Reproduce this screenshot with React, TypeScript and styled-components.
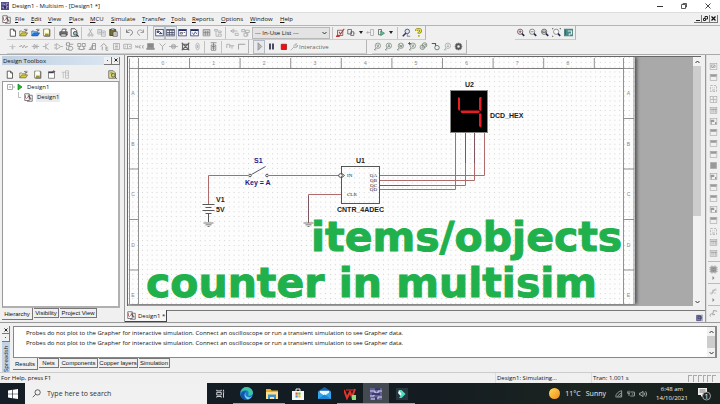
import React, { ReactNode } from "react";
import styled, { createGlobalStyle, css } from "styled-components";

const GlobalStyle = createGlobalStyle`
  *, *::before, *::after { box-sizing: border-box; }
  html, body { margin: 0; padding: 0; }
  body { font-family: "Open Sans", "Noto Sans", sans-serif; font-size: 6px; line-height: 10px; color: #111; background: #f0f0f0; overflow: hidden; }
  button, select, input { font: inherit; color: inherit; margin: 0; padding: 0; border: 0; background: none; border-radius: 0; }
  ul { list-style: none; margin: 0; padding: 0; }
  p, h1, h2 { margin: 0; font-weight: 400; font-size: inherit; }
  svg { display: block; }
`;

/* ---------- icons (12 x 12 grid) ---------- */

const K = "#333";
const G = "#a2a2a2";

const probe = (body: ReactNode, color = "#6d7f70") => (
  <g fill="none" stroke={color} strokeWidth=".9">
    <circle cx="6.5" cy="5" r="3.6" />
    <path d="M4 8 1.5 10.5h3" />
    {body}
  </g>
);

const part = (body: ReactNode) => (
  <g fill="none" stroke="#999">
    <rect x="1.5" y="2" width="9" height="8" strokeWidth=".7" />
    {body}
  </g>
);

const lens = (color: string, body: ReactNode) => (
  <g fill="none" stroke={color}>
    <circle cx="5.5" cy="5" r="3.5" fill="#f7f7f7" />
    <path d="m8 7.5 3 3" stroke="#23235c" strokeWidth="2" />
    {body}
  </g>
);

const icons: Record<string, ReactNode> = {
  app: <g><rect width="12" height="12" fill="#514a86" /><path d="M1 3h4v2h3V2h3M1 8h3v2h4V7h3" fill="none" stroke="#c9c2ea" /><path d="M6 5v6" stroke="#221d4a" strokeWidth="2" /></g>,
  sheet: <g fill="none" stroke="#555"><path d="M1 1h6v9H1zM5 3h6v8H4" fill="#fff" /><path d="M2 3v4M3 8l3-4 2 3" stroke="#b04e5e" /><path d="M6 5h2v3h2" stroke="#333" /></g>,
  new: <path d="M3 1.5h4.5L10 4v7H3zM7.5 1.5V4H10" fill="#fff" stroke={K} />,
  open: <g stroke="#5a5a22" strokeWidth=".8"><path d="M1 10.500V4h3l1 1h4v2" fill="#fff6a0" /><path d="M1 10.500 3.500 6.500H11.500L9 10.500z" fill="#d6c83a" /><path d="M6.500 2.500q2-2 3.500.5M10.500 1v2.500H8" fill="none" stroke={K} /></g>,
  folder: <g stroke="#1d4f9c" strokeWidth=".8"><path d="M1 10.500V4h3l1 1h4v2" fill="#8fd0ff" /><path d="M1 10.500 3.500 6.500H11.500L9 10.500z" fill="#1f7ce0" /><path d="M6.500 2.500q2-2 3.500.5M10.500 1v2.500H8" fill="none" stroke={K} /></g>,
  save: <g><path d="M2 1.500h8v9H2z" fill="#f7f5c0" stroke="#777" /><path d="M4 2h4v4H4z" fill="#fff" /><path d="M4 7.500h5v3H4z" fill="#99962f" /><path d="M10.500 2v9H3" fill="none" stroke="#555" /></g>,
  print: <g><path d="M3.500 5 4.500 1.500h5L8.500 5" fill="#fff" stroke={K} /><path d="M1 5h10v4.500H1z" fill="#777" stroke={K} strokeWidth=".8" /><path d="M2.500 8h7v3h-7z" fill="#ddd" stroke={K} strokeWidth=".8" /></g>,
  preview: <g><path d="M1.500 1h5L9 3.500V11H1.500z" fill="#fff" stroke={K} /><circle cx="7" cy="7" r="2.500" fill="#8fc7c5" stroke={K} /><path d="m9 9 2.500 2.500" stroke={K} strokeWidth="1.500" /></g>,
  cut: <path d="M4 1 8 8M8 1 4 8M2.500 9.500a1.500 1.500 0 1 0 3 0a1.500 1.500 0 1 0-3 0M6.500 9.500a1.500 1.500 0 1 0 3 0a1.500 1.500 0 1 0-3 0" fill="none" stroke={G} />,
  copy: <path d="M1 2h5v6H1zM6 4h5v7H6zM2 4h3M2 6h3M7 6h3M7 8h3" fill="none" stroke="#aaa" />,
  paste: <g><path d="M1 2h8v8H1z" fill="#77732c" stroke={K} /><path d="M3 1h4v2H3z" fill="#ddd" stroke={K} strokeWidth=".7" /><path d="M5.500 5H11v6H5.500z" fill="#eee" stroke={K} strokeWidth=".8" /><path d="M7 7h3M7 9h3" stroke="#666" strokeWidth=".7" /></g>,
  undo: <path d="M2 2v4h4M2.300 5.500C4 1 10.500 2 10 6.500Q9.500 9 6.500 10" fill="none" stroke="#666" />,
  redo: <path d="M10 2v4H6M9.700 5.500C8 1 1.500 2 2 6.500Q2.500 9 5.500 10" fill="none" stroke="#888" />,
  view1: <g><rect x="1" y="2" width="10" height="8.500" fill="#fff" stroke="#29305e" /><path d="M3 4h2v2H3zM5.500 7.500h4M6 4.500l3 3" fill="none" stroke="#29305e" strokeWidth="1.300" /></g>,
  view2: <g><rect x="1" y="2" width="10" height="8.500" fill="#fff" stroke="#39405e" /><path d="M1 3h10M1 6h10M1 8.300h10M4.500 3v7M8 3v7" stroke="#39405e" /></g>,
  view3: <g><rect x="1" y="2" width="10" height="8.500" fill="#fff" stroke="#29306e" /><path d="M1 3h10" stroke="#29306e" strokeWidth="2" /><path d="M3 6h3v2H3zM7.500 6h2" stroke="#555" fill="none" /></g>,
  view4: <g><rect x="1" y="2" width="10" height="8.500" fill="#fff" stroke="#29305e" /><path d="M1 3h10" stroke="#29305e" strokeWidth="2" /><path d="m3 6 2 3 2-4 2 3" stroke="#2c3e8e" fill="none" /></g>,
  table: <path d="M1.500 2h9v8.500h-9zM1.500 4h9M4.500 4v6M7.500 4v6M1.500 6h9M1.500 8h9" fill="none" stroke="#777" strokeWidth=".9" />,
  tree: <path d="M2 2h4v2H2zM7 4h4v2H7zM4 4v7h3M7 8h4v3H7z" fill="none" stroke="#aaa" />,
  back: <path d="M5 1v6M1 4l3-2M1 4l3 2M1 4h9M7 7h4v3H7z" fill="none" stroke="#aaa" />,
  parts: <path d="M1 2h4v3H1zM6 3h5v3H6zM4 7h4v4H4zM9 7v4" fill="none" stroke={G} />,
  erc: <g fill="none"><path d="M2 3h7v7H2z" stroke="#6b4444" /><path d="m4 5 2 3 5-7" stroke="#b33" strokeWidth="1.400" /><path d="M2 10h2v1H1z" stroke="#c33" strokeWidth="2" /></g>,
  transfer: <g fill="none" stroke="#555"><path d="M1 2h5v6H1zM5 5h4v5H5z" /><path d="M8 7h3" stroke="#6a8" /></g>,
  backann: <path d="M6 2h4v8H6zM1 6h5M1 6l2-2M1 6l2 2" fill="none" stroke="#aaa" />,
  forward: <g fill="none"><path d="M2 2h4v7H2z" stroke="#555" /><path d="M5 4l5 3-5 3z" stroke="#2c8d66" fill="#6db898" /></g>,
  find: <g fill="none" stroke="#2a2f5c"><circle cx="7" cy="4.500" r="3" fill="#dce7f4" /><path d="M5 7 1 11" strokeWidth="2" /><path d="M7 8v3h4" stroke="#667" /></g>,
  help: <g><path d="M3 4Q3 1.500 6 1.500T9 4Q9 5.500 6.500 6.500V8" fill="none" stroke="#6e6a12" strokeWidth="3" /><path d="M3 4Q3 1.500 6 1.500T9 4Q9 5.500 6.500 6.500V8" fill="none" stroke="#f1e638" strokeWidth="1.500" /><circle cx="6.500" cy="10.500" r="1.300" fill="#b5ab1c" /></g>,
  source: <path d="M2 6h8M6 3v7M4 8h4" fill="none" stroke="#bbb" />,
  resistor: <path d="M0 6h2l1-2 2 4 2-4 2 4 1-2h2" fill="none" stroke={G} />,
  diode: <path d="M1 6h10M4 3v6l4-3zM8 3v6" fill="none" stroke={G} />,
  transistor: <path d="M1 6h4M5 2v8M5 5l4-3M5 7l4 3" fill="none" stroke={G} />,
  opamp: <path d="M3 2v8l6-4zM0 4h3M0 8h3M9 6h3" fill="none" stroke={G} />,
  gate: <path d="M2 1h4v4H2zM5 6h4q3 2 0 5H5zM1 3h1M6 3h5M2 7v3h3" fill="none" stroke="#888" />,
  cmos: <path d="M1 2h4v4H1zM7 2h4v4H7zM3 6v4h6V6M1 9h2M9 9h2" fill="none" stroke="#888" />,
  misc: <path d="M6 2h4v8H6zM1 10h4V5h5M3 10V7" fill="none" stroke="#888" />,
  mixed: <path d="m1 6 4-4 4 4M3 6v5M8 6v5h3M8 8h3" fill="none" stroke="#888" />,
  indicator: <path d="M2 2h8v8H2zM4 4h4M4 6h4M4 8h4" fill="none" stroke={G} />,
  power: <path d="M1 3h10v6H1zM6 3v6M3 5v2M8 6h2" fill="none" stroke={G} />,
  miscword: <path d="M0 8V5h1l1 2 1-2v3M4 5v3M8 5H6v3h2M12 5H10v3h2" fill="none" stroke={G} />,
  keyboard: <path d="M2 2h8v6H2zM1 8h10v2H1z" fill="#888" stroke="#999" />,
  antenna: <path d="M6 11V6L2 2M6 6l4-4" fill="none" stroke="#999" />,
  motor: <path d="M3 6a3 3 0 1 0 6 0a3 3 0 1 0-6 0M0 6h12M4 5h4v2H4z" fill="none" stroke={G} />,
  ni: <g stroke="#666" fill="none"><path d="M2 3h8v7H2zM1 1l10 10M11 1 1 11" strokeWidth="1.500" /></g>,
  connector: <path d="M4 3q2-3 4 0v6q-2 3-4 0zM6 4v4" fill="none" stroke={G} />,
  mcu: <path d="M3 4h6v7H3zM2 1h8M6 1v10M4 6h4M4 8h4" fill="none" stroke="#777" />,
  block: <path d="M1 8V3h4v5M5 5h6M8 5v4" fill="none" stroke={G} />,
  bus: <path d="M2 10V3h9" fill="none" stroke="#888" />,
  play: <path d="M4 1v10l5-5z" fill="#b8b8b8" stroke="#888" />,
  pause: <path d="M3 2h2v8H3zM7 2h2v8H7z" fill="#14143a" />,
  stop: <path d="M3 3h7v7H3z" fill="#f50d0d" stroke="#941616" />,
  wrench: <path d="m1 11 5-5M6 6q-1-4 4-5L8 4l2 1 1-2q2 4-5 4" fill="none" stroke="#999" />,
  probeV: probe(<path d="m5 3 1.500 4L8 3" />),
  probeA: probe(<path d="m5 7 1.500-4L8 7M5.500 6h2" />),
  probeW: probe(<path d="m4.500 3 1 4 1-3 1 3 1-4" />),
  probeVV: <g>{probe(<path d="m5 3 1.500 4L8 3" />)}<path d="M0 2h4M2 0v4" stroke="#354f36" /></g>,
  probeAV: <g fill="none" stroke="#6d7f70"><circle cx="7.500" cy="4" r="3" /><circle cx="4.500" cy="7" r="3" /><path d="M7 3h2v2M4 6v2h2" /></g>,
  probeRef: <g fill="none" stroke="#3f6a43"><path d="M1 2h5v3" strokeWidth="1.500" /><circle cx="8" cy="7.500" r="3" /></g>,
  probeD: probe(<path d="M5 4h3M5 6h3" />, "#999"),
  gear: <g fill="none" stroke="#555"><circle cx="6" cy="6" r="3" strokeWidth="2.500" /><path d="M6 1v1M6 10v1M1 6h1M10 6h1M2.500 2.500l1 1M8.500 8.500l1 1M2.500 9.500l1-1M8.500 3.500l1-1" strokeWidth="2" /></g>,
  zoomIn: lens("#444", <path d="M3.500 5h4M5.500 3v4" stroke="#933" />),
  zoomOut: lens("#666", <path d="M3.500 5h4" stroke="#3b7a50" />),
  zoomArea: lens("#444", <path d="M3.500 4h4v2h-4z" stroke="#555" />),
  zoomFit: <g>{lens("#777", null)}<path d="M0 2V0h2M10 0h2v2M0 10v2h2" fill="none" stroke={K} /></g>,
  zoomFull: <g><path d="M0 1h12v10H0z" fill="#4f8886" /><path d="M5 4h5v4H7v2" fill="none" stroke="#d6eeee" strokeWidth="1.500" /><path d="M2 3v6" stroke="#2d6260" /></g>,
  close: <g><path d="M2 2h8v9H2z" fill="#fff" stroke="#666" /><path d="M2 3.500h7" stroke="#334" strokeWidth="1.500" /><path d="M9 0v4M7 2h4" stroke="#a33" /></g>,
  rename: <path d="M1 3h5M3 3v8M6 1h4v10H6zM7 4h3M7 7h3" fill="none" stroke="#b5b5b5" />,
  find2: <g><path d="M1 1h6l3 3v7H1z" fill="#e8e38c" stroke="#555" /><circle cx="7" cy="7" r="2.500" fill="#cfd255" stroke="#444" /><path d="m9 9 3 3M3 4h3" stroke="#444" /></g>,
  meter: part(<path d="M3 4h5v3H3zM4 8l3-3" />),
  panelTop: part(<path d="M2 3.500h8" strokeWidth="3" />),
  dots: <g fill="none" stroke="#aaa"><rect x="2" y="2" width="8" height="8" strokeDasharray="3 1.500" /><path d="M4 5h1M7 5h1M4 8h4" /></g>,
  scope: part(<path d="M2 6h8M6 2v8M4 4h1M8 8h1" stroke="#b0b0b0" />),
  wordgen: part(<path d="M2 4.500h8M4 3v6M6.500 3v6M9 3v6" />),
  square: <g><path d="M2 2h8v8H2z" fill="#999" stroke="#aaa" /></g>,
  panelMix: part(<path d="M2 5h5M8 8h2M3 8h1" strokeWidth="3" />),
  clampProbe: <path d="M1 8h4V4h5M3 10l6-8M7 8h2" fill="none" stroke="#aaa" />,
  chip: <g><path d="M2 2h8v8H2z" fill="#888" /><path d="M0 3.500h12M0 6h12M0 8.500h12M4 0v12M8 0v12" stroke="#aaa" strokeWidth=".8" /></g>,
  current: <path d="M2 10a2 2 0 1 1 3-3l1-5 5 1M5 8l3-1" fill="none" stroke="#888" />,
  flag: <g><path d="M1 2h6v8H1z" fill="#8080bd" stroke="#333361" /><path d="M3 4h5v3H3zM9 1v10" fill="none" stroke="#333361" /></g>,
  search: <g fill="none" stroke="#333"><circle cx="7.500" cy="4.500" r="3.500" /><path d="m5 7-4 4" /></g>,
  windows: <path d="m0 1.700 5.200-.7v4.600H0zM6 .900 12 0v5.600H6zM0 6.400h5.200V11L0 10.300zM6 6.400h6V12l-6-.900z" fill="#fff" />,
  taskview: <path d="M1 1v1.500h6V1M1 4.500h6v3.500H1zM1 11.500V10h6v1.500M10 1v2M10 5v6.500M9 4h2" fill="none" stroke="#f2f2f2" strokeWidth="1.100" />,
  edge: <g><circle cx="6" cy="6" r="6" fill="#1d79cf" /><path d="M.3 5Q2 0 6.500 0 12 1 12 6 10.500 9 7.500 7.500 9 3.500 5.500 3 2 3 .3 5z" fill="#3dc7a0" /><path d="M4.500 5Q2 9 7 11.800 3 12.500 1 9 0 5 5.500 3.500z" fill="#12549f" /><path d="M5 5q-1 4 4 4.600l2-1Q9 12 6.500 11 3 8 5 5z" fill="#79d8ef" /></g>,
  explorer: <g><path d="M0 1h4.500l1 1.500H12V11H0z" fill="#e8ae2b" /><path d="M0 4h12v7H0z" fill="#ffe08a" /><path d="M2 6.500h8V11H8V9H4v2H2z" fill="#3f8fd4" /></g>,
  store: <g><path d="M4 3V1h4v2" fill="none" stroke="#eee" /><path d="M0 3h12v9H0z" fill="#f6f6f6" /><path d="M3.500 4.500h2.200v2.200H3.500z" fill="#e4542b" /><path d="M6.300 4.500h2.200v2.200H6.300z" fill="#7db72f" /><path d="M3.500 7.300h2.200v2.200H3.500z" fill="#2e9fe0" /><path d="M6.300 7.300h2.200v2.200H6.300z" fill="#f3b51e" /></g>,
  mail: <g><path d="M0 4 6 0l6 4v7H0z" fill="#1263b4" /><path d="M1.500 3.500h9V8h-9z" fill="#eef7ff" /><path d="m0 4 6 4 6-4v7H0z" fill="#35a5ea" /><path d="m0 11 6-4 6 4z" fill="#1d86d3" /></g>,
  wps: <g fill="none"><path d="m0 2 3 8 3-6 2 5 3-8" stroke="#e3362d" strokeWidth="2" /><path d="M2 2h8" stroke="#b32222" strokeWidth="1.500" /><path d="M8 7h4v5H8z" fill="#8fdc7f" /></g>,
  multisim: <g><path d="M0 0h12v12H0z" fill="#615f94" /><path d="M0 3h5v2h3V3h4M0 8h4V6M12 9H8v2M1 11h4" fill="none" stroke="#d7d6f0" /><path d="M5 1h5M2 6h8M6 9v3" stroke="#2e2b5e" strokeWidth="1.300" /></g>,
  filmora: <g><path d="M0 0h12v12H0z" fill="#26363f" /><path d="M3 2h2.500l4 4-4 4H3l3-4z" fill="#4fe3c2" /><path d="m3 2 3 4-1.500 2L2 5z" fill="#e3fff8" /></g>,
  wifi: <g fill="none" stroke="#ccc"><path d="M1 10Q2 3 10 1M4 10Q5 6 10 4.500M7 10q1-2 3-2.500M1 10.500h9V1" /></g>,
  battery: <path d="M1 2v3h3M3 1v8M5 3h6v6H5M8 5v2M11.500 5v2" fill="none" stroke="#ccc" />,
  volume: <path d="M1 4.500h2L6 2v8L3 7.500H1zM8 4q1.500 2 0 4M10 2q3 4 0 8" fill="none" stroke="#ddd" />,
};

const Svg = styled.svg<{ $s: number }>`
  width: ${(p) => p.$s}px;
  height: ${(p) => p.$s}px;
  flex: none;
`;

const Icon = ({ name, size = 9 }: { name: string; size?: number }) => (
  <Svg viewBox="0 0 12 12" $s={size} aria-hidden="true">
    {icons[name]}
  </Svg>
);

/* ---------- shell ---------- */

const Shell = styled.div`
  display: flex;
  flex-direction: column;
  height: 100vh;
  background: #f0f0f0;
`;

const TitleBar = styled.header`
  display: flex;
  align-items: center;
  height: 13px;
  padding: 0 2px 0 1px;
  gap: 3px;
  background: #fff;
  border-bottom: 1px solid #ddd;
`;

const Title = styled.h1`
  flex: 1;
`;

const WindowButton = styled.button`
  display: grid;
  place-items: center;
  width: 21px;
  height: 11px;
`;

const MenuBar = styled.nav`
  display: flex;
  align-items: center;
  height: 13px;
  padding: 0 2px;
  border-bottom: 1px solid #b5b5b5;
`;

const Menus = styled.div`
  display: flex;
  margin-left: 4px;
`;

const MenuItem = styled.button<{ $w: number }>`
  width: ${(p) => p.$w}px;
  text-align: left;
  &::first-letter { text-decoration: underline; }
`;

const MdiButtons = styled.div`
  display: flex;
  margin-left: auto;
`;

const TinyButton = styled.button`
  display: grid;
  place-items: center;
  width: 8px;
  height: 8px;
  background: #f0f0f0;
  border: solid;
  border-width: 0 1px 1px 0;
  border-color: #777;
`;

const ToolRow = styled.div`
  display: flex;
  align-items: center;
  height: 14px;
  padding-left: 7px;
`;

const Bar = styled.div<{ $gap?: number }>`
  display: flex;
  align-items: center;
  align-self: stretch;
  border-right: 1px solid #b5b5b5;
  border-bottom: 1px solid #ccc;
  margin-left: ${(p) => p.$gap ?? 0}px;
`;

const Group = styled.div<{ $w: number }>`
  display: flex;
  justify-content: space-between;
  align-items: center;
  width: ${(p) => p.$w}px;
  margin-right: 2px;
  & + & {
    padding-left: 3px;
    border-left: 1px solid #c2c2c2;
  }
`;

const ToolButton = styled.button<{ $on?: boolean }>`
  display: grid;
  place-items: center;
  width: 10px;
  height: 12px;
  ${(p) => p.$on && css`background: #e8eaee; box-shadow: 0 0 0 1px #b4bac4;`}
`;

const Caret = styled.button`
  width: 7px;
  height: 12px;
  display: grid;
  place-items: center;
`;

const PartSelect = styled.select`
  appearance: none;
  height: 12px;
  padding-left: 2px;
  background: #e3e3e3;
  border: 1px solid #b8b8b8;
`;

const SelectWrap = styled.label`
  display: grid;
  align-items: center;
  width: 81px;
  margin-right: 2px;
  padding-right: 2px;
  border-right: 1px solid #c2c2c2;
  > * { grid-area: 1 / 1; }
  > svg { justify-self: end; margin-right: 3px; pointer-events: none; }
`;

const Interactive = styled.button`
  display: flex;
  align-items: center;
  gap: 1px;
  width: 76px;
  color: #666;
`;

/* ---------- workspace ---------- */

const Workspace = styled.main`
  display: flex;
  flex: 1;
  min-height: 0;
  border-top: 1px solid #aaa;
`;

const Toolbox = styled.aside`
  display: flex;
  flex-direction: column;
  width: 120px;
  padding: 1px 0 0 2px;
`;

const PanelHead = styled.div`
  display: flex;
  align-items: center;
  height: 9px;
  padding-left: 1px;
  background: linear-gradient(90deg, #bfd0e2, #dce7f3);
  > h2 { flex: 1; }
`;

const PanelTools = styled.div`
  display: flex;
  gap: 4px;
  height: 16px;
  padding: 3px 2px 0;
  border-right: 1px solid #bbb;
  > :last-child { margin-left: auto; }
`;

const Tree = styled.ul`
  flex: 1;
  background: #fff;
  border: 1px solid #888;
  border-right-width: 2px;
  border-bottom-width: 2px;
  border-color: #999 #b0b0b0 #b0b0b0 #999;
  padding: 0 4px;
`;

const TreeRow = styled.li<{ $level: number }>`
  display: flex;
  align-items: center;
  gap: 3px;
  height: 10px;
  padding-left: ${(p) => p.$level * 11}px;
`;

const TreeLabel = styled.span<{ $selected?: boolean }>`
  padding: 0 1px;
  line-height: 9px;
  background: ${(p) => (p.$selected ? "#ececec" : "none")};
`;

const TabStrip = styled.div`
  display: flex;
  align-items: flex-start;
  flex: none;
  gap: 1px;
  height: 14px;
`;

const Tab = styled.button<{ $w: number; $active?: boolean }>`
  width: ${(p) => p.$w}px;
  height: ${(p) => (p.$active ? 12 : 10)}px;
  font-family: "Liberation Sans", Arial, sans-serif;
  line-height: 8px;
  text-align: center;
  white-space: nowrap;
  background: #f0f0f0;
  border: solid #777;
  border-width: ${(p) => (p.$active ? "0 1px 1px 0" : "1px 1px 1px 0")};
`;

const Editor = styled.section`
  display: flex;
  flex-direction: column;
  flex: 1;
  min-width: 0;
  margin-left: 4px;
  border-left: 1px solid #999;
  border-right: 1px solid #999;
`;

const Canvas = styled.div`
  position: relative;
  display: flex;
  flex: 1;
  min-height: 0;
  overflow: hidden;
  margin: 1px 4px 0 2px;
  background: #a9a9a9;
  border-top: 1px solid #666;
  border-left: 1px solid #666;
`;

const Sheet = styled.svg`
  flex: none;
  width: 507px;
  height: 247px;
  background: #fdfdfd;
  box-shadow: 2px 0 3px #555;
`;

const Caption = styled.h2`
  position: absolute;
  left: 18px;
  top: 157px;
  font: 700 41px/46px "DejaVu Sans", "Liberation Sans", sans-serif;
  color: #20b04c;
  -webkit-text-stroke: 1px #20b04c;
  white-space: nowrap;
  > span { display: block; }
  > span:first-child { padding-left: 165px; }
`;

const Scroll = styled.div<{ $w: number }>`
  display: flex;
  flex-direction: column;
  align-items: center;
  width: ${(p) => p.$w}px;
  margin-left: auto;
  background: #f2f2f2;
`;

const Thumb = styled.div<{ $grow: number }>`
  flex: ${(p) => p.$grow};
  align-self: stretch;
  background: #cdcdcd;
`;

const Track = styled.div<{ $grow: number }>`
  flex: ${(p) => p.$grow};
`;

const ScrollButton = styled.button`
  display: grid;
  place-items: center;
  height: 9px;
  width: 8px;
`;

const DocTabs = styled.div`
  display: flex;
  align-items: flex-start;
  justify-content: space-between;
  height: 16px;
  padding-top: 4px;
  flex: none;
`;

const DocTab = styled.button`
  display: flex;
  align-items: center;
  gap: 2px;
  width: 42px;
  height: 12px;
  padding-left: 2px;
  white-space: nowrap;
  border: solid #444;
  border-width: 0 1px 1px 0;
  background: #f7f7f7;
`;

const DocLine = styled.div`
  flex: 1;
  align-self: stretch;
  border-top: 1px solid #777;
  display: flex;
  justify-content: flex-end;
  padding: 3px 1px 0;
`;

const Instruments = styled.aside`
  display: flex;
  flex-direction: column;
  align-items: center;
  width: 14px;
  padding-top: 6px;
  border-left: 1px solid #ddd;
  > button { height: 11px; }
  > button[aria-haspopup] { height: 6px; }
`;

const Rule = styled.hr`
  width: 12px;
  margin: 2px 0;
  border: 0;
  border-top: 1px solid #bbb;
`;

/* ---------- results and status ---------- */

const Results = styled.section`
  display: flex;
  height: 51px;
  padding: 3px 3px 0 2px;
  border-top: 1px solid #999;
  border-bottom: 1px solid #ccc;
`;

const Rail = styled.div`
  display: flex;
  flex-direction: column;
  align-items: center;
  width: 8px;
  margin-right: 3px;
  > h2 {
    flex: 1;
    min-height: 0;
    writing-mode: vertical-rl;
    transform: rotate(180deg);
    width: 8px;
    line-height: 8px;
    background: #c3d3e5;
  }
`;

const ResultBody = styled.div`
  flex: 1;
  min-width: 0;
`;

const Log = styled.div`
  display: flex;
  height: 32px;
  background: #fff;
  border: 1px solid #888;
  border-right-width: 2px;
`;

const LogText = styled.div`
  padding: 1px 0 0 12px;
  white-space: nowrap;
`;

const StatusBar = styled.footer`
  display: flex;
  align-items: center;
  height: 10px;
  padding: 0 3px 0 1px;
`;

const StatusCell = styled.span<{ $w?: number }>`
  ${(p) => (p.$w ? css`width: ${p.$w}px; padding-left: 1px; border-left: 1px solid #ddd;` : css`flex: 1;`)}
`;

const Locks = styled.div`
  display: grid;
  grid-template-columns: repeat(6, 1fr);
  width: 29px;
  height: 7px;
  > i { border: solid #aaa; border-width: 1px 0 0 1px; margin-right: 1px; }
`;

/* ---------- taskbar ---------- */

const Taskbar = styled.nav`
  display: flex;
  height: 21px;
  color: #eee;
  background: linear-gradient(90deg, #151d26, #141c22 60%, #1b2420 80%, #17201c);
`;

const TaskButton = styled.button<{ $w?: number; $open?: boolean; $active?: boolean }>`
  display: grid;
  place-items: center;
  width: ${(p) => p.$w ?? 26}px;
  background: ${(p) => (p.$active ? "#444b50" : "none")};
  ${(p) => p.$open && css`box-shadow: inset 0 -1px 0 #6bb0e8;`}
`;

const SearchBox = styled.label`
  display: flex;
  align-items: center;
  gap: 6px;
  width: 182px;
  padding-left: 7px;
  color: #333;
  background: #f1f1f1;
  > input { flex: 1; min-width: 0; font-size: 7px; outline: 0; }
  > input::placeholder { color: #333; opacity: 1; }
`;

const Tray = styled.div`
  display: flex;
  align-items: center;
  margin-left: auto;
  gap: 4px;
  padding-right: 9px;
`;

const Weather = styled.button`
  display: flex;
  align-items: center;
  gap: 5px;
  margin-right: 5px;
  font-size: 7px;
`;

const Sun = styled.span`
  width: 11px;
  height: 11px;
  border-radius: 50%;
  background: linear-gradient(135deg, #ffdc5a, #f28a1c);
`;

const Clock = styled.button`
  width: 42px;
  text-align: center;
  line-height: 9px;
`;

const Notice = styled.button`
  width: 14px;
  height: 16px;
`;

/* ---------- content ---------- */

const menus: [string, number][] = [
  ["File", 16], ["Edit", 17], ["View", 21], ["Place", 21], ["MCU", 21], ["Simulate", 31],
  ["Transfer", 29], ["Tools", 21], ["Reports", 29], ["Options", 29], ["Window", 30], ["Help", 24],
];

const tools = (names: string[], on: string[] = []) =>
  names.map((n, i) => (
    <ToolButton key={n + i} aria-label={n} $on={on.includes(n)}>
      <Icon name={n} />
    </ToolButton>
  ));

const instruments = [
  "meter", "panelTop", "dots", "scope", "wordgen", "panelMix", "panelTop", "panelTop", "panelTop",
  "square", "panelMix", "panelTop", "panelTop", "panelMix", "panelTop", "dots", "wordgen", "wordgen",
];

const Chevron = ({ up }: { up?: boolean }) => (
  <svg width="5" height="4" viewBox="0 0 5 4" aria-hidden="true">
    <path d={up ? "M.5 3 2.500 1 4.500 3" : "M.5 1 2.500 3 4.500 1"} fill="none" stroke="#333" />
  </svg>
);

const DropMark = () => (
  <svg width="4" height="3" viewBox="0 0 4 3" aria-hidden="true">
    <path d="M0 0h4L2 3z" fill="#222" />
  </svg>
);

const SideMark = () => (
  <svg width="3" height="4" viewBox="0 0 3 4" aria-hidden="true">
    <path d="M.5 0v4L2.500 2z" fill="#888" />
  </svg>
);

const columns = [0, 1, 2, 3, 4, 5, 6, 7, 8];
const rows = ["A", "B", "C", "D", "E"];

const Ground = ({ x, y }: { x: number; y: number }) => (
  <path d={`M${x - 5} ${y}h10M${x - 3} ${y + 1.8}h6M${x - 1} ${y + 3.5}h2`} stroke="#555" strokeWidth=".8" />
);

const Schematic = () => (
  <Sheet viewBox="128 57 507 247" role="img" aria-label="Counter circuit schematic">
    <defs>
      <pattern id="grid" width="4.820" height="4.820" x="142" y="57" patternUnits="userSpaceOnUse">
        <rect width="1" height="1" fill="#d2d2d2" />
      </pattern>
    </defs>
    <rect x="128" y="57" width="507" height="247" fill="url(#grid)" />
    <g stroke="#777" strokeWidth=".8" fill="none">
      <path d="M129.500 304V58.500M138.500 304V68.500H623.500V304M129 68.500H634M138.500 58v10M623.500 58v10M634 57v247" />
      {columns.map((c) => <path key={c} d={`M${189.5 + c * 50.6} 58v10`} />)}
      {[118.5, 169, 219.5, 270].map((y) => <path key={y} d={`M129 ${y}h9.500M623.500 ${y}h10.500`} />)}
    </g>
    <g fontFamily="Liberation Sans, sans-serif" fontSize="5" fill="#888" textAnchor="middle">
      {columns.map((c) => <text key={c} x={163 + c * 50.6} y="65">{c}</text>)}
      {rows.map((r, i) => <text key={r} x="133" y={95 + i * 50.5}>{r}</text>)}
      {rows.map((r, i) => <text key={r} x="628.500" y={95 + i * 50.5}>{r}</text>)}
    </g>
    <g fill="none" stroke="#b06a6a">
      <path d="M208.500 204V175.500H248M269 175.500H339M341 194.500H308.500V223" />
      <path d="M379.500 175.500H484.500V133M379.500 180.500H474.500V133M379.500 185.500H465.500V133M379.500 189.500H455.500V133" />
    </g>
    <path d="M465.500 133v30M474.500 133v30M380 185.500h30M308.500 196v26" stroke="#7c5560" />
    <g fill="none" stroke="#444" strokeWidth=".9">
      <path d="M202.500 204.500h12M205.500 207.500h6M202.500 210.500h12M205.500 213.500h6M208.500 214v8" />
      <circle cx="250" cy="175.500" r="1.300" />
      <circle cx="267" cy="175.500" r="1.300" />
      <path d="m251.500 174.500 14-8" stroke="#446" />
      <rect x="341.500" y="166.500" width="38" height="37" />
      <circle cx="340.500" cy="175.500" r="1.800" fill="#fff" />
      <path d="m342 173.500 2.500 2-2.500 2" />
    </g>
    <Ground x={208.5} y={223} />
    <Ground x={308.5} y={223} />
    <g fontFamily="Liberation Serif, serif" fontSize="5" fill="#222">
      <text x="347" y="177">IN</text>
      <text x="347" y="196">CLR</text>
      <g textAnchor="end">
        <text x="377" y="177">QA</text>
        <text x="377" y="182">QB</text>
        <text x="377" y="187">QC</text>
        <text x="377" y="191">QD</text>
      </g>
    </g>
    <g fontFamily="Liberation Sans, sans-serif" fontSize="7" fill="#222" fontWeight="700">
      <text x="356" y="163">U1</text>
      <text x="465" y="87">U2</text>
      <text x="216" y="202">V1</text>
      <text x="216" y="212">5V</text>
      <text x="337" y="212">CNTR_4ADEC</text>
      <text x="490" y="118">DCD_HEX</text>
      <g fill="#1a1a8c">
        <text x="254" y="163">S1</text>
        <text x="245" y="185">Key = A</text>
      </g>
    </g>
    <rect x="450.500" y="90.500" width="37" height="42" fill="#000" stroke="#888" />
    <g fill="#e61e24">
      <path d="m458 97 2 1v12l-1 1-1-2zM461 110.500h18l1 1.500-1.500 1h-17l-1-1.500zM480 97h1.500v13l-1 1-1.500-1.500V98zM480 113l1.500 1v12l-1 1.500-1.500-1.500v-12z" />
    </g>
  </Sheet>
);

const message =
  "Probes do not plot to the Grapher for interactive simulation. Connect an oscilloscope or run a transient simulation to see Grapher data.";

export default function App() {
  return (
    <Shell>
      <GlobalStyle />
      <TitleBar>
        <Icon name="app" size={8} />
        <Title>Design1 - Multisim - [Design1 *]</Title>
        <WindowButton aria-label="Minimize"><svg width="6" height="6"><path d="M0 3.500h6" stroke="#333" /></svg></WindowButton>
        <WindowButton aria-label="Restore"><svg width="6" height="6"><path d="M.5 1.500h4v4h-4zM2 1.500v-1h3.500V4h-1" fill="none" stroke="#333" strokeWidth=".8" /></svg></WindowButton>
        <WindowButton aria-label="Close"><svg width="6" height="6"><path d="m.5.5 5 5M5.500.5l-5 5" stroke="#333" strokeWidth=".9" /></svg></WindowButton>
      </TitleBar>

      <MenuBar>
        <Icon name="sheet" size={9} />
        <Menus>
          {menus.map(([name, w]) => <MenuItem key={name} $w={w}>{name}</MenuItem>)}
        </Menus>
        <MdiButtons>
          <TinyButton aria-label="Minimize document"><svg width="4" height="5"><path d="M0 4.500h4" stroke="#222" /></svg></TinyButton>
          <TinyButton aria-label="Restore document"><svg width="5" height="5"><path d="M.5 2.500h2v2h-2zM2 2V.5h2.500V3H3" fill="none" stroke="#222" /></svg></TinyButton>
          <TinyButton aria-label="Close document"><svg width="5" height="5"><path d="m.5.5 4 4M4.500.5l-4 4" stroke="#111" strokeWidth="1.300" /></svg></TinyButton>
        </MdiButtons>
      </MenuBar>

      <ToolRow>
        <Bar>
          <Group $w={45}>{tools(["new", "open", "folder", "save"])}</Group>
          <Group $w={25}>{tools(["print", "preview"])}</Group>
          <Group $w={37}>{tools(["cut", "copy", "paste"])}</Group>
          <Group $w={25}>{tools(["undo", "redo"])}</Group>
        </Bar>
        <Bar $gap={6}>
          <Group $w={69}>{tools(["view1", "view2", "view3", "view4", "table", "tree"], ["view1", "view2"])}</Group>
          <Group $w={25}>{tools(["back", "parts"])}</Group>
          <SelectWrap>
            <PartSelect aria-label="In-use parts" defaultValue="list">
              <option value="list">--- In-Use List ---</option>
            </PartSelect>
            <Chevron />
          </SelectWrap>
          <Group $w={60}>
            {tools(["erc", "transfer"])}
            <Caret aria-label="Transfer options"><DropMark /></Caret>
            {tools(["backann", "forward"])}
            <Caret aria-label="Annotate options"><DropMark /></Caret>
          </Group>
          <Group $w={26}>{tools(["find", "help"])}</Group>
        </Bar>
        <Bar $gap={89}>
          <Group $w={58}>{tools(["zoomIn", "zoomOut", "zoomArea", "zoomFit", "zoomFull"])}</Group>
        </Bar>
      </ToolRow>

      <ToolRow>
        <Bar>
          <Group $w={195}>
            {tools(["source", "resistor", "diode", "transistor", "opamp", "gate", "cmos", "misc", "mixed", "indicator", "power", "miscword", "keyboard", "antenna", "motor", "ni", "connector"])}
          </Group>
          <Group $w={15}>{tools(["mcu"])}</Group>
          <Group $w={25}>{tools(["block", "bus"])}</Group>
        </Bar>
        <Bar $gap={5}>
          <Group $w={34}>{tools(["play", "pause", "stop"], ["play"])}</Group>
          <Interactive><Icon name="wrench" size={8} />Interactive</Interactive>
        </Bar>
        <Bar $gap={5}>
          <Group $w={92}>{tools(["probeV", "probeA", "probeW", "probeVV", "probeAV", "probeRef", "probeD", "gear"])}</Group>
        </Bar>
      </ToolRow>

      <Workspace>
        <Toolbox>
          <PanelHead>
            <h2>Design Toolbox</h2>
            <TinyButton aria-label="Pin"><svg width="3" height="3"><path d="M1 1h1v1H1z" fill="#555" /></svg></TinyButton>
            <TinyButton aria-label="Close toolbox"><svg width="4" height="4"><path d="m.5.5 3 3M3.500.5l-3 3" stroke="#222" /></svg></TinyButton>
          </PanelHead>
          <PanelTools>{tools(["new", "open", "save", "close", "rename", "find2"])}</PanelTools>
          <Tree>
            <TreeRow $level={0}>
              <svg width="16" height="8" viewBox="0 0 16 8">
                <path d="M.5 1.500h5v5h-5zM2 4h2M5.500 4H8" fill="none" stroke="#aaa" />
                <path d="M11 1v6l4-3z" fill="#14c81e" stroke="#135a18" strokeWidth=".6" />
              </svg>
              <TreeLabel>Design1</TreeLabel>
            </TreeRow>
            <TreeRow $level={1}>
              <svg width="3" height="10"><path d="M.5 0v5.500H3" fill="none" stroke="#bbb" /></svg>
              <Icon name="sheet" size={9} />
              <TreeLabel $selected>Design1</TreeLabel>
            </TreeRow>
          </Tree>
          <TabStrip>
            <Tab $w={31} $active>Hierarchy</Tab>
            <Tab $w={25}>Visibility</Tab>
            <Tab $w={37}>Project View</Tab>
          </TabStrip>
        </Toolbox>

        <Editor>
          <Canvas>
            <Schematic />
            <Caption>
              <span>items/objects</span>
              <span>counter in multisim</span>
            </Caption>
            <Scroll $w={8}>
              <ScrollButton aria-label="Scroll up"><Chevron up /></ScrollButton>
              <Thumb $grow={149} />
              <Track $grow={80} />
              <ScrollButton aria-label="Scroll down"><Chevron /></ScrollButton>
            </Scroll>
          </Canvas>
          <DocTabs>
            <DocTab><Icon name="sheet" size={9} />Design1 *</DocTab>
            <DocLine><Icon name="flag" size={8} /></DocLine>
          </DocTabs>
        </Editor>

        <Instruments>
          {tools(instruments)}
          <Rule />
          {tools(["chip"])}
          <Caret aria-haspopup="menu" aria-label="LabVIEW instruments"><SideMark /></Caret>
          <Rule />
          {tools(["clampProbe"])}
          <Caret aria-haspopup="menu" aria-label="Probe types"><SideMark /></Caret>
          <Rule />
          {tools(["current"])}
        </Instruments>
      </Workspace>

      <Results>
        <Rail>
          <TinyButton aria-label="Close results"><svg width="4" height="4"><path d="m.5.5 3 3M3.500.5l-3 3" stroke="#222" /></svg></TinyButton>
          <TinyButton aria-label="Pin results"><svg width="3" height="3"><path d="M1 1h1v1H1z" fill="#555" /></svg></TinyButton>
          <h2>Spreadsh</h2>
        </Rail>
        <ResultBody>
          <Log>
            <LogText>
              <p>{message}</p>
              <p>{message}</p>
            </LogText>
            <Scroll $w={8}>
              <ScrollButton aria-label="Scroll log up"><Chevron up /></ScrollButton>
              <Thumb $grow={1} />
              <ScrollButton aria-label="Scroll log down"><Chevron /></ScrollButton>
            </Scroll>
          </Log>
          <TabStrip>
            <Tab $w={25} $active>Results</Tab>
            <Tab $w={20}>Nets</Tab>
            <Tab $w={38}>Components</Tab>
            <Tab $w={39}>Copper layers</Tab>
            <Tab $w={31}>Simulation</Tab>
          </TabStrip>
        </ResultBody>
      </Results>

      <StatusBar>
        <StatusCell>For Help, press F1</StatusCell>
        <StatusCell $w={96}>Design1: Simulating...</StatusCell>
        <StatusCell $w={97}>Tran: 1.001 s</StatusCell>
        <Locks><i /><i /><i /><i /><i /><i /></Locks>
      </StatusBar>

      <Taskbar>
        <TaskButton $w={25} aria-label="Start"><Icon name="windows" size={10} /></TaskButton>
        <SearchBox>
          <Icon name="search" size={9} />
          <input type="text" aria-label="Search" placeholder="Type here to search" />
        </SearchBox>
        <TaskButton aria-label="Task view"><Icon name="taskview" size={9} /></TaskButton>
        <TaskButton $open aria-label="Edge"><Icon name="edge" size={13} /></TaskButton>
        <TaskButton $open aria-label="File Explorer"><Icon name="explorer" size={12} /></TaskButton>
        <TaskButton aria-label="Store"><Icon name="store" size={12} /></TaskButton>
        <TaskButton aria-label="Mail"><Icon name="mail" size={13} /></TaskButton>
        <TaskButton $open aria-label="WPS"><Icon name="wps" size={12} /></TaskButton>
        <TaskButton $open $active aria-label="Multisim"><Icon name="multisim" size={12} /></TaskButton>
        <TaskButton $open aria-label="Filmora"><Icon name="filmora" size={12} /></TaskButton>
        <Tray>
          <Weather><Sun /><span>11°C</span><span>Sunny</span></Weather>
          <Icon name="wifi" size={8} />
          <Icon name="battery" size={8} />
          <Icon name="volume" size={8} />
          <Clock>6:48 am<br />14/10/2021</Clock>
          <Notice aria-label="Notifications">
            <svg width="14" height="16" viewBox="0 0 14 16">
              <path d="M1 2h9v7H6l-2 2V9H1z" fill="#eee" />
              <path d="M2.500 4h6M2.500 6h6" stroke="#555" strokeWidth=".8" />
              <circle cx="9.500" cy="10" r="4" fill="#222" stroke="#bbb" strokeWidth=".8" />
              <text x="9.500" y="12.500" fontSize="7" textAnchor="middle" fill="#fff">1</text>
            </svg>
          </Notice>
        </Tray>
      </Taskbar>
    </Shell>
  );
}
